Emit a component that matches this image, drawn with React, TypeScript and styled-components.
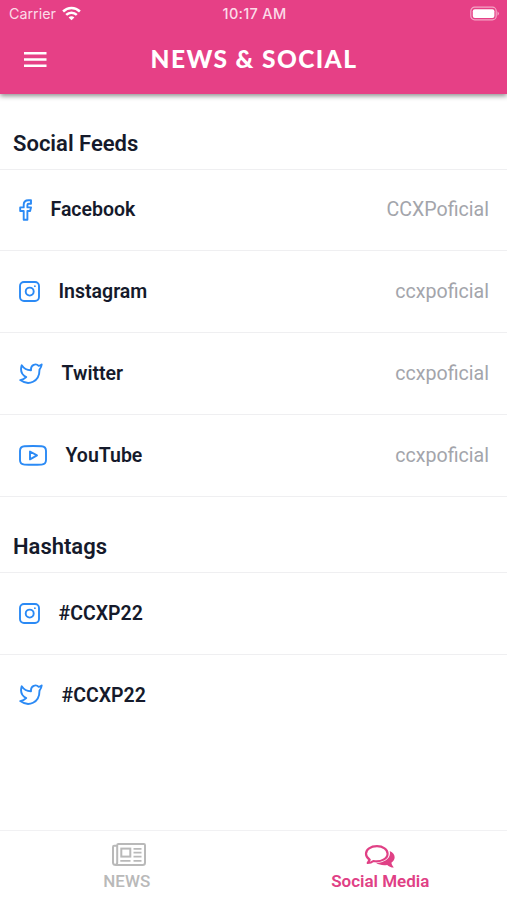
import React from "react";
import styled, { createGlobalStyle } from "styled-components";

const GlobalStyle = createGlobalStyle`
  * { box-sizing: border-box; }
  body { margin: 0; background: #fff; }
`;

const Screen = styled.div`
  display: flex;
  flex-direction: column;
  height: 900px;
  width: 507px;
  overflow: hidden;
  background: #fff;
  color: #151a2b;
  font-family: Roboto, "Liberation Sans", sans-serif;
`;

const Header = styled.header`
  flex: none;
  height: 94px;
  background: #e64086;
  color: #fff;
  box-shadow: 0 2px 5px rgba(0, 0, 0, 0.45);
`;

const StatusBar = styled.div`
  display: grid;
  grid-template-columns: 1fr auto 1fr;
  align-items: center;
  height: 28px;
  padding: 0 7px 0 9px;
  font: 500 14.5px/28px Inter, sans-serif;
  color: #fbdbe8;
`;

const Carrier = styled.div`
  display: flex;
  align-items: center;
  gap: 6px;
  font-size: 14.3px;
  font-weight: 400;

  svg {
    margin-bottom: 2px;
  }
`;

const Clock = styled.div`
  font-size: 14.5px;
  letter-spacing: 0.3px;
`;

const BatterySlot = styled.div`
  display: flex;
  justify-content: flex-end;
  padding-bottom: 2px;
`;

const NavBar = styled.div`
  display: grid;
  grid-template-columns: 70px 1fr 70px;
  align-items: center;
  height: 62px;
`;

const MenuButton = styled.button`
  display: flex;
  justify-content: center;
  padding: 0;
  border: 0;
  background: none;
`;

const Title = styled.h1`
  margin: 0;
  padding-left: 1px;
  text-align: center;
  white-space: nowrap;
  font: 900 24.5px/30px Lato, sans-serif;
  letter-spacing: 1.4px;
`;

const Content = styled.main`
  flex: 1;
`;

const SectionTitle = styled.h2<{ $height: number }>`
  display: flex;
  align-items: flex-end;
  height: ${(p) => p.$height}px;
  margin: 0;
  padding: 0 13px 10.5px;
  border-bottom: 1px solid #efeff1;
  font-size: 22px;
  font-weight: 600;
  line-height: 28px;
`;

const Row = styled.div<{ $last?: boolean }>`
  display: flex;
  align-items: center;
  height: 81.9px;
  padding: 0 18px 0 19px;
  border-bottom: 1px solid ${(p) => (p.$last ? "transparent" : "#efeff1")};
  font-size: 19.5px;
  line-height: 24px;
`;

const RowIcon = styled.span`
  display: flex;
  margin-right: 18.5px;
`;

const RowLabel = styled.span`
  padding-top: 1px;
  font-weight: 600;
`;

const Handle = styled.span`
  margin-left: auto;
  padding-top: 1px;
  font-size: 19.6px;
  color: #a3a5ab;
`;

const TabBar = styled.nav`
  flex: none;
  display: grid;
  grid-template-columns: 1fr 1fr;
  height: 70px;
  border-top: 1px solid #f1f1f3;
`;

const Tab = styled.div<{ $active?: boolean }>`
  display: flex;
  flex-direction: column;
  align-items: center;
  padding-top: 10px;
  color: ${(p) => (p.$active ? "#e04085" : "#b9b9b9")};
  font-size: 17px;
  font-weight: ${(p) => (p.$active ? 600 : 500)};
  line-height: 20px;

  svg {
    margin-bottom: 2px;
    margin-left: ${(p) => (p.$active ? 0 : 5)}px;
  }
`;

const stroke = {
  fill: "none",
  stroke: "#2b8af5",
  strokeWidth: 1.9,
  strokeLinecap: "round" as const,
  strokeLinejoin: "round" as const,
};

const FacebookIcon = () => (
  <svg width="13" height="22" viewBox="0 0 13 22" {...stroke}>
    <path d="M12 1.2H9.4C6.5 1.2 4.7 3.1 4.7 5.8V8.4H1.2V12H4.7V20.7H8.4V12H11.1L12 8.4H8.4V6.1C8.4 5.2 8.9 4.7 9.8 4.7H12Z" />
  </svg>
);

const InstagramIcon = () => (
  <svg width="21" height="21" viewBox="0 0 21 21" {...stroke}>
    <rect x="1" y="1" width="19" height="19" rx="4" />
    <circle cx="10.7" cy="10.6" r="4" />
    <circle cx="15.9" cy="5.2" r="0.9" fill="#2b8af5" stroke="none" />
  </svg>
);

const TwitterIcon = () => (
  <svg width="24" height="22" viewBox="0 0 24 22" {...stroke}>
    <path d="M22.7 1.5C21.8 2.2 20.8 2.6 19.7 2.9C16.8-.2 12 1.9 12 6.1V7.2C8.2 7.3 4.8 5.4 2.7 2.2C1.2 7.2 2.6 11.7 7.2 14.1C5.5 15.8 3.4 16.8 1.2 17.1C9.7 23.2 20.5 18.9 20.5 6.7C21.7 5.2 22.5 3.3 22.7 1.5Z" />
  </svg>
);

const YouTubeIcon = () => (
  <svg width="28" height="21" viewBox="0 0 28 21" {...stroke}>
    <path d="M5.5 1.2Q14 .8 22.5 1.2Q27 1.4 27 6V15Q27 19.4 22.5 19.6Q14 20 5.5 19.6Q1 19.4 1 15V6Q1 1.4 5.5 1.2Z" />
    <path d="M11 6.5V14.4L18 10.4Z" />
  </svg>
);

const icons = {
  facebook: FacebookIcon,
  instagram: InstagramIcon,
  twitter: TwitterIcon,
  youtube: YouTubeIcon,
};

type Feed = { icon: keyof typeof icons; label: string; handle?: string };

const feeds: Feed[] = [
  { icon: "facebook", label: "Facebook", handle: "CCXPoficial" },
  { icon: "instagram", label: "Instagram", handle: "ccxpoficial" },
  { icon: "twitter", label: "Twitter", handle: "ccxpoficial" },
  { icon: "youtube", label: "YouTube", handle: "ccxpoficial" },
];

const hashtags: Feed[] = [
  { icon: "instagram", label: "#CCXP22" },
  { icon: "twitter", label: "#CCXP22" },
];

const FeedRow = ({ feed, last }: { feed: Feed; last?: boolean }) => {
  const Icon = icons[feed.icon];
  return (
    <Row $last={last}>
      <RowIcon>
        <Icon />
      </RowIcon>
      <RowLabel>{feed.label}</RowLabel>
      {feed.handle && <Handle>{feed.handle}</Handle>}
    </Row>
  );
};

const WifiIcon = () => (
  <svg width="19" height="15" viewBox="0 0 19 15" fill="none" stroke="#fff" strokeWidth="2.5">
    <path d="M1.1 5.5C5.8.9 13.2.9 17.9 5.5" />
    <path d="M4.2 8.8C7.2 5.9 11.8 5.9 14.8 8.8" />
    <path d="M9.5 14.3L6.6 11.4C8.2 9.9 10.8 9.9 12.4 11.4Z" fill="#fff" stroke="none" />
  </svg>
);

const BatteryIcon = () => (
  <svg width="30" height="15" viewBox="0 0 30 15">
    <rect x="0.8" y="1.2" width="25.4" height="12.6" rx="3.8" fill="none" stroke="#f4a5c6" strokeWidth="1.2" />
    <rect x="2.8" y="3.2" width="21.6" height="8.8" rx="2" fill="#fff" />
    <path d="M27.5 5.2Q30.3 7.5 27.5 9.8Z" fill="#f4a5c6" />
  </svg>
);

const MenuIcon = () => (
  <svg width="23" height="17" viewBox="0 0 23 17" stroke="#fff" strokeWidth="2.6">
    <path d="M0 2.3H22.5M0 8.5H22.5M0 14.7H22.5" />
  </svg>
);

const NewsIcon = () => (
  <svg width="34" height="28" viewBox="0 0 34 28" fill="none" stroke="currentColor" strokeWidth="2">
    <path d="M5.2 4.8H2.2Q1 4.8 1 6V21.5Q1 24 4 24H30.6Q33 24 33 21.8V4.2Q33 3 31.8 3H6.4Q5.2 3 5.2 4.2V21.5Q5.2 23.8 3.2 24" />
    <rect x="9.3" y="7.6" width="9" height="8" />
    <path d="M21.5 7.8H29.5M21.5 11.7H29.5M21.5 15.6H29.5M8.3 19.8H18.5M21.5 19.8H29.5" strokeWidth="1.8" />
  </svg>
);

const ChatIcon = () => (
  <svg width="32" height="28" viewBox="0 0 32 28" fill="currentColor">
    <path
      d="M13 5.2C6.5 5.2 2 8.5 2 12.7C2 15.2 3.5 17.2 5.7 18.6L3.7 22C6 22 8 21.2 9.4 20C17.4 21.3 23.6 17.5 23.6 12.7C23.6 8.5 19 5.2 13 5.2Z"
      fill="none"
      stroke="currentColor"
      strokeWidth="2.2"
      strokeLinejoin="round"
    />
    <path d="M25.7 10C32.2 12.8 31.8 19 27.4 21.7C27.6 23.4 28.6 24.8 29.8 26.6C27 26.4 24.7 25.4 23.2 23.9C18.7 24.6 14.8 23.6 12.2 21.9C20.5 21.7 27.5 17.3 25.7 10Z" />
  </svg>
);

export default function App() {
  return (
    <>
      <GlobalStyle />
      <Screen>
        <Header>
          <StatusBar>
            <Carrier>
              Carrier
              <WifiIcon />
            </Carrier>
            <Clock>10:17 AM</Clock>
            <BatterySlot>
              <BatteryIcon />
            </BatterySlot>
          </StatusBar>
          <NavBar>
            <MenuButton aria-label="Menu">
              <MenuIcon />
            </MenuButton>
            <Title>NEWS &amp; SOCIAL</Title>
          </NavBar>
        </Header>
        <Content>
          <SectionTitle $height={75.5}>Social Feeds</SectionTitle>
          {feeds.map((feed) => (
            <FeedRow key={feed.label} feed={feed} />
          ))}
          <SectionTitle $height={75.8}>Hashtags</SectionTitle>
          {hashtags.map((feed, i) => (
            <FeedRow key={feed.icon} feed={feed} last={i === hashtags.length - 1} />
          ))}
        </Content>
        <TabBar>
          <Tab>
            <NewsIcon />
            NEWS
          </Tab>
          <Tab $active>
            <ChatIcon />
            Social Media
          </Tab>
        </TabBar>
      </Screen>
    </>
  );
}
